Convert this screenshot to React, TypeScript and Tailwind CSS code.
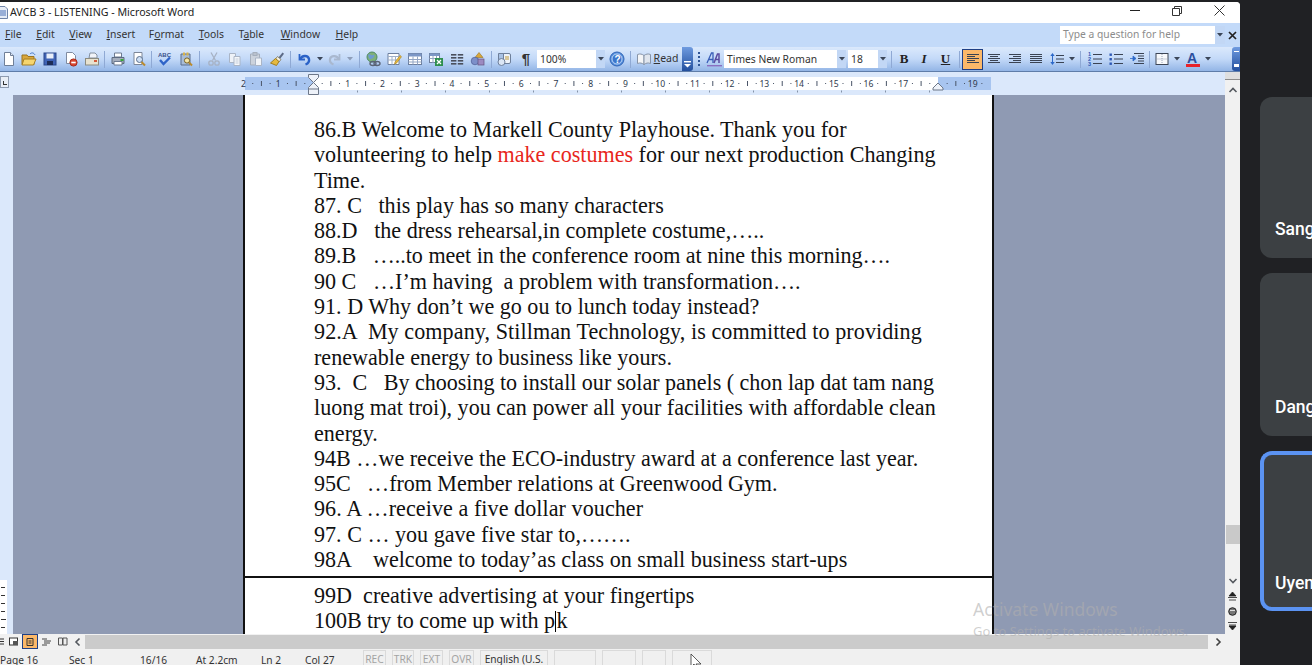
import React from "react";

const ui = "font-['Noto_Sans','Open_Sans',sans-serif]";

const I = ({ children, w = 16, h = 16 }: { children: React.ReactNode; w?: number; h?: number }) => (
  <svg width={w} height={h} viewBox={`0 0 ${w} ${h}`} shapeRendering="geometricPrecision">{children}</svg>
);

const NewDoc = () => <I><path d="M3.5 1.5h6l3 3v10h-9z" fill="#fff" stroke="#6f7f98" /><path d="M9.5 1.5v3h3" fill="#dfe7f4" stroke="#6f7f98" /></I>;
const Open = () => <I><path d="M1 4h5l1 1.5h6v8H1z" fill="#d9a73c" stroke="#9b7420" /><path d="M3 8h12l-2.5 6H1z" fill="#f6d56f" stroke="#a67f25" /><path d="M9 3c2-2 4-1 5 1" fill="none" stroke="#3f73c6" /></I>;
const Save = () => <I><rect x="2" y="2" width="12" height="12" fill="#3f63b5" stroke="#2a4789" /><rect x="4.5" y="2.5" width="7" height="5" fill="#e8eef8" /><rect x="5" y="10" width="6" height="4" fill="#1d2d57" /></I>;
const Perm = () => <I><path d="M3.5 1.5h6l3 3v8h-9z" fill="#fff" stroke="#7f8ba0" /><circle cx="10.5" cy="11.5" r="3.6" fill="#d9452e" stroke="#a82c1b" /><rect x="8.3" y="10.7" width="4.4" height="1.6" fill="#fff" /></I>;
const Mail = () => <I><path d="M6 2h5l2 2v3H5z" fill="#f1f4f9" stroke="#84909f" /><rect x="1.5" y="7.5" width="13" height="6.5" fill="#e8e2cf" stroke="#8b8b80" /><rect x="10" y="9" width="3" height="2" fill="#d35a3a" /></I>;
const Print = () => <I><path d="M4.5 2h7v4h-7z" fill="#fff" stroke="#6d7a90" /><path d="M2 6.5h12v6H2z" fill="#a5aebd" stroke="#5d6a80" /><path d="M4 10.5h8v3.5H4z" fill="#fff" stroke="#6d7a90" /><rect x="10.5" y="8" width="3" height="2" fill="#36a83a" /></I>;
const Preview = () => <I><path d="M3 1.5h8v12H3z" fill="#fff" stroke="#7d8799" /><circle cx="8.5" cy="8.5" r="3" fill="#cfe0f5" stroke="#5a6f8d" /><path d="M10.5 11l3.5 3.5" stroke="#b98a2e" strokeWidth="2" /></I>;
const Spell = () => <I><text x="1" y="6" fontSize="6" fontWeight="700" fill="#39518a" fontFamily="Liberation Sans">ABC</text><path d="M3 9l3.5 4L13 6.5" fill="none" stroke="#2f64c8" strokeWidth="2.4" /></I>;
const Research = () => <I><path d="M3 3h9v11H3z" fill="#a7bcd8" stroke="#5a6f8d" /><rect x="5" y="1.5" width="2" height="3" fill="#d8b34a" /><rect x="8.5" y="1.5" width="2" height="3" fill="#d8b34a" /><circle cx="9" cy="9.5" r="2.6" fill="#f4e6a8" stroke="#7a6426" /><path d="M11 11.5l3 3" stroke="#b98a2e" strokeWidth="2" /></I>;
const Cut = () => <I><g fill="none" stroke="#a7b2c4" strokeWidth="1.3"><path d="M5 1.5l4.5 8M11 1.5l-4.5 8" /><circle cx="5" cy="12" r="2.2" /><circle cx="11" cy="12" r="2.2" /></g></I>;
const Copy = () => <I><path d="M2.5 2.5h6v9h-6z" fill="#eef2f8" stroke="#aab5c6" /><path d="M7 5.5h6v9H7z" fill="#f5f7fa" stroke="#aab5c6" /><path d="M8.5 8h3M8.5 10h3M8.5 12h3" stroke="#c3ccda" /></I>;
const Paste = () => <I><path d="M2.5 3h9v11h-9z" fill="#cbd2dc" stroke="#a5afbd" /><rect x="5" y="1.5" width="4" height="3" fill="#b9c1cd" stroke="#a5afbd" /><path d="M7.5 7h6v7.5h-6z" fill="#f1f4f8" stroke="#aab5c6" /></I>;
const Painter = () => <I><path d="M9.5 6.5l4-5 1.5 1.2-3.8 5z" fill="#5c6a86" /><path d="M8.5 5.5l3.5 3-2 2.5-3.5-3z" fill="#f2efe2" stroke="#8a8672" /><path d="M6.5 7.5l3.5 3-2.5 4L1.5 12z" fill="#e5b93e" stroke="#a07d1f" /></I>;
const Undo = () => <I><path d="M3.5 3v5.5H9" fill="none" stroke="#2a62c7" strokeWidth="1.8" /><path d="M4 8.5C6 4 12 4 13 8c.5 2.5-1 4.5-3.5 5.5" fill="none" stroke="#2a62c7" strokeWidth="2.4" /></I>;
const Redo = () => <I><path d="M12.5 3v5.5H7" fill="none" stroke="#a9b8cf" strokeWidth="1.8" /><path d="M12 8.5C10 4 4 4 3 8c-.5 2.5 1 4.5 3.5 5.5" fill="none" stroke="#a9b8cf" strokeWidth="2.2" /></I>;
const Drop = ({ c = "#3b4658" }: { c?: string }) => <svg width="6" height="4" viewBox="0 0 6 4"><path d="M0 0h6L3 3.5z" fill={c} /></svg>;
const Link = () => <I><circle cx="7" cy="6" r="5" fill="#7fb07a" stroke="#4f8a65" /><path d="M3 4c2-2 3 1 5 0s2 2 0 3-3 2-4 0" fill="#6d9bd0" /><g fill="none" stroke="#5b6476" strokeWidth="1.4"><ellipse cx="8" cy="12.5" rx="3" ry="2" /><ellipse cx="12" cy="12.5" rx="3" ry="2" /></g></I>;
const TablesB = () => <I><path d="M2 2.5h11v11H2z" fill="#fff" stroke="#6d7f9e" /><path d="M2 5.5h11M2 9h11M6 5.5v8M9.5 5.5v8" stroke="#9fb0c9" /><path d="M9 11l5-6.5 1.5 1.2-5 6.5-2 1z" fill="#e6b83f" stroke="#a5801f" strokeWidth=".6" /></I>;
const Table = () => <I><rect x="1.5" y="2.5" width="13" height="11" fill="#fff" stroke="#6d7f9e" /><rect x="1.5" y="2.5" width="13" height="3" fill="#7c97c6" /><path d="M1.5 8.5h13M1.5 11h13M6 5.5v8M10.5 5.5v8" stroke="#93a6c4" /></I>;
const Excel = () => <I><rect x="1.5" y="2.5" width="10" height="9" fill="#fff" stroke="#6d7f9e" /><rect x="1.5" y="2.5" width="10" height="2.5" fill="#7c97c6" /><path d="M1.5 7.5h10M5 5v7M8.5 5v7" stroke="#93a6c4" /><rect x="7" y="7" width="8" height="8" fill="#2f8f4e" /><path d="M9 9l4 4M13 9l-4 4" stroke="#fff" strokeWidth="1.3" /></I>;
const Cols = () => <I><g fill="#4a4f5c"><rect x="2" y="3" width="5.4" height="1.6" /><rect x="2" y="6" width="5.4" height="1.6" /><rect x="2" y="9" width="5.4" height="1.6" /><rect x="2" y="12" width="5.4" height="1.6" /><rect x="8.8" y="3" width="5.4" height="1.6" /><rect x="8.8" y="6" width="5.4" height="1.6" /><rect x="8.8" y="9" width="5.4" height="1.6" /><rect x="8.8" y="12" width="5.4" height="1.6" /></g></I>;
const Drawing = () => <I><path d="M9 1.5l4 5H5z" fill="#d9a63b" stroke="#96721f" strokeWidth=".6" /><circle cx="5" cy="10" r="3.8" fill="#7c8fc9" stroke="#4c5c94" strokeWidth=".7" /><rect x="8" y="8" width="6" height="6" fill="#9c8ac0" stroke="#63527f" strokeWidth=".7" /></I>;
const DocMap = () => <I><rect x="1.5" y="2.5" width="12" height="10" rx="1.5" fill="#eef3fa" stroke="#6e7f9a" /><path d="M1.5 2.5h5v10h-5z" fill="#a9c2e5" stroke="#6e7f9a" /><circle cx="4.5" cy="11" r="3.5" fill="#dbe6f5" stroke="#6e7f9a" /><path d="M8 6h4M8 8h4" stroke="#c19a3a" /></I>;
const Help = () => <I><circle cx="8" cy="8" r="7" fill="#5a92de" stroke="#2e63b5" /><circle cx="8" cy="8" r="5" fill="#3b76cc" stroke="#bcd5f5" /><text x="5.4" y="11.6" fontSize="10" fontWeight="700" fill="#fff" fontFamily="Liberation Sans">?</text></I>;
const Book = () => <I><path d="M1.5 3.5C4 2.5 6 3 8 4.5v9c-2-1.5-4-2-6.5-1z" fill="#f4f5f7" stroke="#8794a8" /><path d="M14.5 3.5C12 2.5 10 3 8 4.5v9c2-1.5 4-2 6.5-1z" fill="#dfe5ee" stroke="#8794a8" /></I>;
const Style = () => <svg width="17" height="17" viewBox="0 0 17 17"><path d="M1 12L5.5 2h1.5v10M2.8 8.5H7" fill="none" stroke="#3a5fb8" strokeWidth="1.3" /><path d="M8 12l3.5-9H13v9M9.5 8.5H13" fill="none" stroke="#5a4ba0" strokeWidth="1.5" /><rect x="1" y="14" width="15" height="1.4" fill="#8a6fc0" /></svg>;
const Lines = ({ d }: { d: string[] }) => <I><g fill="none" stroke="#3a4353" strokeWidth="1.1">{d.map((p, i) => <path key={i} d={p} />)}</g></I>;
const AL = () => <Lines d={["M2 3.5h12", "M2 5.5h8", "M2 7.5h12", "M2 9.5h8", "M2 11.5h12"]} />;
const AC = () => <Lines d={["M2 3.5h12", "M4 5.5h8", "M2 7.5h12", "M4 9.5h8", "M2 11.5h12"]} />;
const AR = () => <Lines d={["M2 3.5h12", "M6 5.5h8", "M2 7.5h12", "M6 9.5h8", "M2 11.5h12"]} />;
const AJ = () => <Lines d={["M2 3.5h12", "M2 5.5h12", "M2 7.5h12", "M2 9.5h12", "M2 11.5h12"]} />;
const LSp = () => <I><path d="M3.5 2l2.2 3H1.3zM3.5 14l2.2-3H1.3z" fill="#2d69c9" /><rect x="3" y="4" width="1" height="8" fill="#2d69c9" /><path d="M7 4.5h8M7 8h8M7 11.5h8" stroke="#3a4353" strokeWidth="1.1" /></I>;
const Num = () => <I><text x="1" y="5.4" fontSize="5.5" fill="#2d58b5" fontFamily="Liberation Sans" fontWeight="700">1</text><text x="1" y="10.2" fontSize="5.5" fill="#2d58b5" fontFamily="Liberation Sans" fontWeight="700">2</text><text x="1" y="15" fontSize="5.5" fill="#2d58b5" fontFamily="Liberation Sans" fontWeight="700">3</text><path d="M6 3.5h9M6 8h9M6 12.5h9" stroke="#3a4353" strokeWidth="1.1" /></I>;
const Bul = () => <I><g fill="#2d58b5"><rect x="1.5" y="2.5" width="2.4" height="2.4" /><rect x="1.5" y="7" width="2.4" height="2.4" /><rect x="1.5" y="11.5" width="2.4" height="2.4" /></g><path d="M6 3.5h9M6 8h9M6 12.5h9" stroke="#3a4353" strokeWidth="1.1" /></I>;
const Ind = () => <I><path d="M5 2.5h10M9 5h6M9 7.5h6M9 10h6M5 12.5h10" stroke="#3a4353" strokeWidth="1.1" /><path d="M1 7.5h3M4 5v5l3-2.5z" fill="#2d69c9" stroke="#2d69c9" strokeWidth=".8" /></I>;
const Border = () => <I><rect x="2" y="2.5" width="12" height="11" fill="#f7f9fc" stroke="#3d4656" /><path d="M8 3v10M2.5 8h11" stroke="#9aa5b7" strokeDasharray="1 1" /></I>;
const FontCol = () => <svg width="16" height="17" viewBox="0 0 16 17"><text x="2" y="12" fontSize="14" fontWeight="700" fill="#2d4f9e" fontFamily="Liberation Sans">A</text><rect x="1" y="13" width="14" height="3" fill="#e8232a" /></svg>;

const Btn = ({ w, children }: { w: string; children?: React.ReactNode }) => (
  <div className={`${w} h-full flex items-center justify-center shrink-0`}>{children}</div>
);
const Sep = ({ w }: { w: string }) => (
  <div className={`${w} h-full flex items-center justify-center shrink-0`}>
    <div className="w-px h-[17px] bg-[#8fa9d4]" />
  </div>
);
const Box = ({ w, text, cls = "" }: { w: string; text: string; cls?: string }) => (
  <div className={`${w} h-[18px] bg-white flex items-center shrink-0 ${cls}`}>
    <span className="flex-1 pl-[3px] text-[10.3px] text-[#333] whitespace-pre leading-none">{text}</span>
    <div className="w-[9px] h-full bg-[#c2d7f5] flex items-center justify-center"><Drop /></div>
  </div>
);

const Toolbar = () => (
  <div className={`${ui} h-[25px] flex items-center bg-gradient-to-b from-[#dbe9fc] via-[#c3d9f8] to-[#93b5e6] border-b border-[#5f7da9] shrink-0`}>
    <Btn w="w-[18px]"><NewDoc /></Btn>
    <Btn w="w-[21px]"><Open /></Btn>
    <Btn w="w-[21px]"><Save /></Btn>
    <Btn w="w-[21px]"><Perm /></Btn>
    <Btn w="w-[21px]"><Mail /></Btn>
    <Sep w="w-[5px]" />
    <Btn w="w-[21px]"><Print /></Btn>
    <Btn w="w-[21px]"><Preview /></Btn>
    <Sep w="w-[5px]" />
    <Btn w="w-[21px]"><Spell /></Btn>
    <Btn w="w-[21px]"><Research /></Btn>
    <Sep w="w-[7px]" />
    <Btn w="w-[21px]"><Cut /></Btn>
    <Btn w="w-[21px]"><Copy /></Btn>
    <Btn w="w-[21px]"><Paste /></Btn>
    <Btn w="w-[21px]"><Painter /></Btn>
    <Sep w="w-[7px]" />
    <Btn w="w-[20px]"><Undo /></Btn>
    <Btn w="w-[12px]"><Drop /></Btn>
    <Btn w="w-[18px]"><Redo /></Btn>
    <Btn w="w-[12px]"><Drop c="#8d9db8" /></Btn>
    <Sep w="w-[6px]" />
    <Btn w="w-[21px]"><Link /></Btn>
    <Btn w="w-[21px]"><TablesB /></Btn>
    <Btn w="w-[21px]"><Table /></Btn>
    <Btn w="w-[21px]"><Excel /></Btn>
    <Btn w="w-[21px]"><Cols /></Btn>
    <Btn w="w-[21px]"><Drawing /></Btn>
    <Sep w="w-[6px]" />
    <Btn w="w-[21px]"><DocMap /></Btn>
    <Btn w="w-[22px]"><span className="font-['Liberation_Sans'] font-bold text-[15px] text-[#333]">¶</span></Btn>
    <Box w="w-[68px]" text="100%" />
    <Btn w="w-[24px]"><Help /></Btn>
    <Sep w="w-[3px]" />
    <Btn w="w-[50px]">
      <div className="flex items-center gap-[2px]"><Book /><span className="text-[10.5px] text-[#333]"><u>R</u>ead</span></div>
    </Btn>
    <div className="w-[11px] h-full bg-gradient-to-b from-[#6f9be0] to-[#234f9e] flex items-end justify-center pb-[3px] rounded-r-[3px] shrink-0">
      <svg width="7" height="7" viewBox="0 0 7 7"><rect x="0" y="0" width="7" height="1.4" fill="#fff" /><path d="M0 3h7L3.5 6.5z" fill="#fff" /></svg>
    </div>
    <Btn w="w-[12px]">
      <div className="w-[2px] h-[14px] border-l-2 border-dotted border-[#2f5597]" />
    </Btn>
    <Btn w="w-[19px]"><Style /></Btn>
    <Box w="w-[122px]" text="Times New Roman" />
    <Box w="w-[39px]" text="18" cls="ml-[2px]" />
    <Sep w="w-[8px]" />
    <Btn w="w-[18px]"><span className="font-['Liberation_Serif'] font-bold text-[13px] text-[#222]">B</span></Btn>
    <Btn w="w-[22px]"><span className="font-['Liberation_Serif'] font-bold italic text-[13px] text-[#222]">I</span></Btn>
    <Btn w="w-[21px]"><span className="font-['Liberation_Serif'] font-bold underline text-[13px] text-[#222]">U</span></Btn>
    <Sep w="w-[6px]" />
    <div className="w-[21px] h-[21px] bg-[#fbb869] border border-[#1f3f85] flex items-center justify-center shrink-0"><AL /></div>
    <Btn w="w-[21px]"><AC /></Btn>
    <Btn w="w-[21px]"><AR /></Btn>
    <Btn w="w-[21px]"><AJ /></Btn>
    <Btn w="w-[21px]"><LSp /></Btn>
    <Btn w="w-[9px]"><Drop /></Btn>
    <Sep w="w-[8px]" />
    <Btn w="w-[21px]"><Num /></Btn>
    <Btn w="w-[21px]"><Bul /></Btn>
    <Btn w="w-[21px]"><Ind /></Btn>
    <Sep w="w-[4px]" />
    <Btn w="w-[21px]"><Border /></Btn>
    <Btn w="w-[10px]"><Drop /></Btn>
    <Btn w="w-[21px]"><FontCol /></Btn>
    <Btn w="w-[10px]"><Drop /></Btn>
    <div className="flex-1" />
    <div className="w-[8px] h-full bg-gradient-to-b from-[#6f9be0] to-[#234f9e] rounded-l-[3px] flex flex-col items-center justify-between py-[4px]">
      <span className="w-[5px] h-[1px] bg-white" />
      <span className="w-[5px] h-[3px] bg-white" />
    </div>
  </div>
);

const Ruler = () => {
  const ox = 72;
  const cm = 34.72;
  const marks: React.ReactNode[] = [];
  for (let i = -2; i <= 19; i++) {
    const x = ox + i * cm;
    if (i !== 0 && i !== 18) {
      marks.push(<text key={"n" + i} x={x} y={15.2} fontSize="8.6" textAnchor="middle" fill="#2f3a4d" fontFamily="Noto Sans">{Math.abs(i)}</text>);
    }
    [0.25, 0.5, 0.75].forEach((f) => {
      const px = x + f * cm;
      if (px > 748) return;
      marks.push(f === 0.5
        ? <rect key={`t${i}${f}`} x={px} y={9} width="1" height="5" fill="#4a5568" />
        : <rect key={`t${i}${f}`} x={px} y={11} width="1" height="1" fill="#4a5568" />);
    });
  }
  for (let k = 1; 72 + 44 * k < 697; k++) {
    marks.push(<rect key={"tab" + k} x={72 + 44 * k} y={18.5} width="1" height="2" fill="#8492a8" />);
  }
  return (
    <svg width="760" height="23" viewBox="0 0 760 23" className="shrink-0">
      <rect x="4" y="5" width="746" height="13" fill="#a8c5f0" />
      <rect x="72" y="5" width="625" height="13" fill="#fff" />
      {marks}
      <path d="M67.5 2.5h10v3l-5 5-5-5z" fill="#eef2f9" stroke="#6d7788" />
      <path d="M72.5 10.5l5 5v7h-10v-7z" fill="#eef2f9" stroke="#6d7788" />
      <path d="M67.5 17h10" stroke="#6d7788" />
      <path d="M697 11l5 5v2h-10v-2z" fill="#eef2f9" stroke="#6d7788" />
    </svg>
  );
};

const Line = ({ children, ws = "" }: { children: React.ReactNode; ws?: string }) => (
  <div className={`h-[25.3px] leading-[25.3px] whitespace-pre ${ws}`}>{children}</div>
);

const Chev = ({ dir, c = "#55595f" }: { dir: "up" | "down" | "left" | "right"; c?: string }) => {
  const d = { up: "M1.5 6L5 2.5 8.5 6", down: "M1.5 3L5 6.5 8.5 3", left: "M6.5 1.5L3 5l3.5 3.5", right: "M3.5 1.5L7 5 3.5 8.5" }[dir];
  return <svg width="10" height="9" viewBox="0 0 10 9"><path d={d} fill="none" stroke={c} strokeWidth="1.6" /></svg>;
};

const Status = ({ w, children, dim = false }: { w: string; children?: React.ReactNode; dim?: boolean }) => (
  <div className={`${w} h-[15px] shrink-0 ml-[6px] border-l border-t border-r border-[#dadada] flex items-center justify-center whitespace-pre pt-[2px] ${dim ? "text-[#a4a4a4]" : "text-[#333]"}`}>{children}</div>
);

const Card = ({ name, active = false, h }: { name: string; active?: boolean; h: string }) => (
  <div className={`${h} w-[70px] shrink-0 rounded-l-[12px] bg-[#3c4043] flex items-end ${active ? "border-[4px] border-r-0 border-[#5b93f2] pl-[11px] pb-[13px]" : "pl-[15px] pb-[18px]"}`}>
    <span className="font-['Roboto',sans-serif] font-medium text-white text-[17.5px] leading-[22px]">{name}</span>
  </div>
);

export default function App() {
  return (
    <div className="w-[1312px] h-[665px] overflow-hidden bg-[#202124] flex">
      <div className="w-[1240px] h-[665px] mt-[2px] bg-white rounded-tr-[4px] flex flex-col shrink-0 overflow-hidden relative">
        {/* title bar */}
        <div className={`${ui} h-[21px] flex items-center bg-white shrink-0`}>
          <svg width="8" height="13" viewBox="0 0 8 13" className="shrink-0"><path d="M-1 .5h6l2.5 2.5v9.5H-1z" fill="#e6ecf6" stroke="#6f84a8" /><path d="M0 5h6M0 7h6M0 9h6" stroke="#4d73b8" /></svg>
          <span className="ml-[2px] text-[10.65px] text-[#222] whitespace-pre">AVCB 3 - LISTENING - Microsoft Word</span>
          <div className="ml-auto flex items-center pb-[4px]">
            <div className="w-[10px] h-px bg-[#222] mr-[32px]" />
            <svg width="10" height="10" viewBox="0 0 10 10" className="mr-[32px]"><path d="M.5 2.5h7v7h-7zM2.5 2.5v-2h7v7H7.5" fill="none" stroke="#333" /></svg>
            <svg width="11" height="11" viewBox="0 0 11 11" className="mr-[15px]"><path d="M.5.5l10 10M10.5.5l-10 10" stroke="#333" /></svg>
          </div>
        </div>
        {/* menu bar */}
        <div className={`${ui} h-[24px] flex items-center bg-[#c3daf9] pl-[5px] gap-[14.5px] text-[10.4px] text-[#333] shrink-0`}>
          <span><u>F</u>ile</span><span><u>E</u>dit</span><span><u>V</u>iew</span><span><u>I</u>nsert</span><span className="-ml-[1px]">F<u>o</u>rmat</span><span><u>T</u>ools</span><span>T<u>a</u>ble</span><span className="ml-[2px]"><u>W</u>indow</span><span className="ml-[1px]"><u>H</u>elp</span>
          <div className="ml-auto flex items-center">
            <div className="w-[165px] h-[18px] bg-white flex items-center">
              <span className="flex-1 pl-[3px] text-[10.3px] text-[#8c8c8c]">Type a question for help</span>
              <div className="w-[10px] h-full bg-[#c2d7f5] flex items-center justify-center"><Drop /></div>
            </div>
            <svg width="9" height="9" viewBox="0 0 9 9" className="mx-[3px]"><path d="M1 1l7 7M8 1L1 8" stroke="#222" strokeWidth="1.7" /></svg>
          </div>
        </div>
        <Toolbar />
        {/* ruler row */}
        <div className="h-[23px] flex bg-[#dbe8fb] shrink-0">
          <div className="w-[9px] h-[12px] mt-[4px] bg-[#e9eef6] border border-[#8e9bb0] shrink-0 flex items-end justify-center pb-[2px]">
            <div className="w-[4px] h-[4px] border-l border-b border-[#333]" />
          </div>
          <div className="w-[232px] shrink-0" />
          <Ruler />
          <div className="flex-1" />
          <div className="w-[15px] h-[23px] bg-[#f1f1f1] flex flex-col items-center shrink-0">
            <div className="w-full h-[8px] bg-[#dfdfdf] border-b border-[#8c8c8c]" />
            <div className="mt-[6px]"><Chev dir="up" /></div>
          </div>
        </div>
        {/* main */}
        <div className="h-[539px] flex shrink-0 relative">
          <div className="w-[13px] shrink-0 bg-[#dbe8fb] flex flex-col justify-end">
            <div className="w-[7px] h-[54px] bg-white flex flex-col justify-around pl-[1px] py-[3px]">
              <span className="w-[4px] h-px bg-[#333]" /><span className="w-[4px] h-px bg-[#333]" /><span className="w-[4px] h-px bg-[#333]" /><span className="w-[4px] h-px bg-[#333]" /><span className="w-[5px] h-px bg-[#333]" /><span className="w-[4px] h-px bg-[#333]" />
            </div>
          </div>
          <div className="w-[230px] shrink-0 bg-[#8f9ab3]" />
          <div className="w-[751px] shrink-0 bg-white border-x-2 border-[#111] font-['Liberation_Serif',serif] text-[22.1px] text-[#111] overflow-hidden">
            <div className="h-[483px] border-b-2 border-[#111] pl-[69px] pt-[22px]">
              <Line>86.B Welcome to Markell County Playhouse. Thank you for</Line>
              <Line>volunteering to help <span className="text-[#e8261c]">make costumes</span> for our next production Changing</Line>
              <Line>Time.</Line>
              <Line>87. C   this play has so many characters</Line>
              <Line>88.D   the dress rehearsal,in complete costume,…..</Line>
              <Line ws="tracking-[-0.03px]">89.B   …..to meet in the conference room at nine this morning….</Line>
              <Line>90 C   …I’m having  a problem with transformation….</Line>
              <Line>91. D Why don’t we go ou to lunch today instead?</Line>
              <Line ws="tracking-[0.08px]">92.A  My company, Stillman Technology, is committed to providing</Line>
              <Line>renewable energy to business like yours.</Line>
              <Line ws="tracking-[-0.03px]">93.  C   By choosing to install our solar panels ( chon lap dat tam nang</Line>
              <Line>luong mat troi), you can power all your facilities with affordable clean</Line>
              <Line>energy.</Line>
              <Line>94B …we receive the ECO-industry award at a conference last year.</Line>
              <Line ws="tracking-[-0.05px]">95C   …from Member relations at Greenwood Gym.</Line>
              <Line ws="tracking-[0.06px]">96. A …receive a five dollar voucher</Line>
              <Line>97. C … you gave five star to,…….</Line>
              <Line>98A    welcome to today’as class on small business start-ups</Line>
            </div>
            <div className="pl-[69px] pt-[5px]">
              <Line>99D  creative advertising at your fingertips</Line>
              <Line ws="tracking-[-0.08px]"><span>100B try to come up with p</span><span className="inline-block w-[1.5px] h-[21px] bg-black align-[-4px]" /><span>k</span></Line>
            </div>
          </div>
          <div className="flex-1 bg-[#8f9ab3]" />
          <div className="w-[15px] shrink-0 bg-[#f1f1f1] flex flex-col items-center">
            <div className="h-[430px] shrink-0" />
            <div className="w-[14px] h-[19px] bg-[#c9c9c9] shrink-0" />
            <div className="flex-1 flex flex-col items-center justify-end pb-[3px] gap-[6px]">
              <Chev dir="down" />
              <svg width="9" height="9" viewBox="0 0 9 9" className="mt-[1px]"><path d="M4.5 0L8 4H1zM0 5.5h9M1 8h7" stroke="#222" fill="#222" strokeWidth=".8" /></svg>
              <svg width="9" height="9" viewBox="0 0 9 9"><circle cx="4.5" cy="4.5" r="3.8" fill="#777" stroke="#222" /><path d="M2 3.5h5" stroke="#ddd" /></svg>
              <svg width="9" height="9" viewBox="0 0 9 9"><path d="M0 .5h9M1 3h7M4.5 8L1 4h7z" stroke="#222" fill="#222" strokeWidth=".8" /></svg>
            </div>
          </div>
        </div>
        {/* bottom scrollbar */}
        <div className="h-[16px] flex items-start bg-[#f1f1f1] shrink-0">
          <div className="w-[85px] h-[15px] shrink-0 flex items-center">
            <div className="w-[4px] overflow-hidden"><svg width="5" height="9" viewBox="0 0 5 9"><path d="M0 2h5M0 4.5h5M0 7h5" stroke="#333" /></svg></div>
            <div className="w-[14px] ml-[3px] flex justify-center"><svg width="10" height="9" viewBox="0 0 10 9"><rect x=".5" y="1" width="8" height="7" fill="#fff" stroke="#333" /><rect x="4" y="4" width="5" height="4" fill="#555" /></svg></div>
            <div className="w-[16px] h-[15px] ml-[1px] bg-[#fbb869] border border-[#1f3f85] flex items-center justify-center"><svg width="8" height="8" viewBox="0 0 8 8"><path d="M1 .5h6v7H1zM2.5 3h3M2.5 5h3" fill="none" stroke="#333" /></svg></div>
            <div className="w-[17px] flex justify-center"><svg width="9" height="8" viewBox="0 0 9 8"><path d="M0 1h5M2 3h7M2 5h6M0 7h5" stroke="#444" /></svg></div>
            <div className="w-[15px] flex justify-center"><svg width="10" height="9" viewBox="0 0 10 9"><path d="M.5 1h4v7h-4zM5 1h4v7H5z" fill="#eee" stroke="#555" /></svg></div>
            <div className="ml-[3px]"><Chev dir="left" /></div>
          </div>
          <div className="w-[1123px] h-[14px] mt-px bg-[#cbcbcb] shrink-0" />
          <div className="w-[20px] h-[15px] flex items-center justify-center shrink-0"><Chev dir="right" c="#444" /></div>
        </div>
        {/* status bar */}
        <div className={`${ui} h-[15px] flex items-start bg-[#f0f0f0] text-[10.2px] leading-[15px] shrink-0 overflow-hidden`}>
          <div className="w-[190px] shrink-0 flex text-[#333] whitespace-pre pt-[3px]">
            <span className="w-[69px]">Page 16</span><span className="w-[71px]">Sec 1</span><span>16/16</span>
          </div>
          <div className="w-[167px] shrink-0 flex text-[#333] whitespace-pre pl-[6px] pt-[3px]">
            <span className="w-[65px]">At 2.2cm</span><span className="w-[44px]">Ln 2</span><span>Col 27</span>
          </div>
          <Status w="w-[23px]" dim>REC</Status>
          <Status w="w-[22px]" dim>TRK</Status>
          <Status w="w-[23px]" dim>EXT</Status>
          <Status w="w-[25px]" dim>OVR</Status>
          <Status w="w-[68px]">English (U.S.</Status>
          <Status w="w-[42px]" />
          <Status w="w-[34px]" />
          <Status w="w-[24px]" />
          <Status w="w-[40px]" />
        </div>
        {/* mouse pointer */}
        <svg width="13" height="14" viewBox="0 0 13 14" className="absolute left-[690px] top-[652px]"><path d="M1 0v13l3-3 2 4h2l-2-4h5z" fill="#fff" stroke="#333" strokeWidth=".8" /></svg>
        {/* Activate Windows watermark */}
        <div className="absolute left-[973px] top-[596px] font-['Noto_Sans',sans-serif] text-[#afafaf]/60 whitespace-pre pointer-events-none">
          <div className="text-[17.5px] leading-[22px]">Activate Windows</div>
          <div className="text-[13px] leading-[18px] mt-[2px]">Go to Settings to activate Windows.</div>
        </div>
      </div>
      {/* sidebar */}
      <div className="flex-1 pl-[20px] pt-[97px] flex flex-col gap-[15px] overflow-hidden">
        <Card name="Sang" h="h-[161px]" />
        <Card name="Dang" h="h-[163px]" />
        <Card name="Uyen" active h="h-[160px]" />
      </div>
    </div>
  );
}
